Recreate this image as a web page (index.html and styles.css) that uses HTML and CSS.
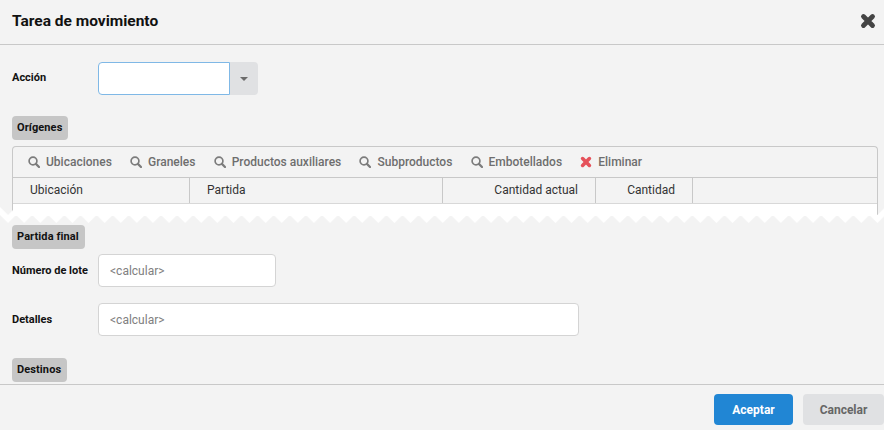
FILE: index.html
```html
<!DOCTYPE html>
<html lang="es">
<head>
    <meta charset="UTF-8">
    <title>Tarea de movimiento</title>
    <link rel="stylesheet" href="styles.css">
</head>
<body>

<svg class="icon-defs" width="0" height="0">
    <symbol id="i-search" viewBox="0 0 12 12">
        <circle cx="5" cy="5" r="3.9" fill="none" stroke="currentColor" stroke-width="1.7"/>
        <path d="M7.9 7.9L11 11" fill="none" stroke="currentColor" stroke-width="2.2" stroke-linecap="round"/>
    </symbol>
    <symbol id="i-times" viewBox="0 0 12 12">
        <path d="M2.6 2.6L9.4 9.4M9.4 2.6L2.6 9.4" fill="none" stroke="currentColor" stroke-width="3.6" stroke-linecap="round"/>
    </symbol>
</svg>

<div class="dialog">
    <div class="dialog-header">
        <h1>Tarea de movimiento</h1>
        <svg class="close"><use href="#i-times"/></svg>
    </div>

    <div class="dialog-body">
        <div class="field field-action">
            <label>Acción</label>
            <input type="text" class="combo-input">
            <span class="combo-button"><i class="caret"></i></span>
        </div>

        <div class="section-label section-origenes">Orígenes</div>

        <div class="panel">
            <div class="toolbar">
                <span class="tool"><svg><use href="#i-search"/></svg>Ubicaciones</span>
                <span class="tool"><svg><use href="#i-search"/></svg>Graneles</span>
                <span class="tool"><svg><use href="#i-search"/></svg>Productos auxiliares</span>
                <span class="tool"><svg><use href="#i-search"/></svg>Subproductos</span>
                <span class="tool"><svg><use href="#i-search"/></svg>Embotellados</span>
                <span class="tool tool-delete"><svg><use href="#i-times"/></svg>Eliminar</span>
            </div>
            <div class="grid-head">
                <span class="col col-ubicacion">Ubicación</span>
                <span class="col col-partida">Partida</span>
                <span class="col col-actual">Cantidad actual</span>
                <span class="col col-cantidad">Cantidad</span>
                <span class="col col-rest"></span>
            </div>
            <div class="grid-body"></div>
        </div>

        <svg class="torn" width="100%" height="16">
            <defs>
                <pattern id="teeth" width="16.1" height="16" patternUnits="userSpaceOnUse">
                    <polygon points="0,0 8.05,8 16.1,0 16.1,8 8.05,16 0,8" fill="#fff"/>
                </pattern>
            </defs>
            <rect width="100%" height="16" fill="url(#teeth)"/>
        </svg>

        <div class="section-label section-final">Partida final</div>

        <div class="field field-lote">
            <label>Número de lote</label>
            <input type="text" class="text-input input-short" placeholder="&lt;calcular&gt;">
        </div>
        <div class="field field-detalles">
            <label>Detalles</label>
            <input type="text" class="text-input input-long" placeholder="&lt;calcular&gt;">
        </div>

        <div class="section-label section-destinos">Destinos</div>
    </div>

    <div class="dialog-footer">
        <button class="btn btn-primary">Aceptar</button>
        <button class="btn btn-default">Cancelar</button>
    </div>
</div>

</body>
</html>
```

FILE: styles.css
```css
body {
    margin: 0;
    height: 430px;
    overflow: hidden;
    background: #f3f3f3;
    font-family: 'Roboto', sans-serif;
    font-size: 12px;
    color: #222;
}
.icon-defs {
    display: block;
    height: 0;
}
.dialog {
    display: flex;
    flex-direction: column;
    height: 430px;
}
.dialog-header {
    display: flex;
    justify-content: space-between;
    align-items: center;
    box-sizing: border-box;
    height: 45px;
    padding: 0 8px 2px 12px;
    border-bottom: 1px solid #c8c8c8;
    flex: none;
}
.dialog-header h1 {
    margin: 0;
    font-size: 15.5px;
    font-weight: 700;
    color: #111;
}
.close {
    width: 16px;
    height: 16px;
    color: #444;
}
.dialog-body {
    position: relative;
    flex: 1;
    overflow: hidden;
    padding: 0 6px 0 12px;
}
.field {
    display: flex;
    align-items: center;
}
.field label {
    width: 86px;
    flex: none;
    font-size: 11px;
    font-weight: 700;
    color: #111;
    white-space: nowrap;
}
.field-action {
    margin-top: 17px;
}
.field-action label {
    margin-bottom: 2px;
}
.field-lote {
    margin-top: 5px;
}
.field-detalles {
    margin-top: 16px;
}
.combo-input {
    box-sizing: border-box;
    width: 132px;
    height: 33px;
    border: 1px solid #7fb8e6;
    border-radius: 4px 0 0 4px;
    background: #fff;
    outline: none;
}
.combo-button {
    display: flex;
    align-items: center;
    justify-content: center;
    width: 28px;
    height: 33px;
    background: #e0e1e3;
    border-radius: 0 4px 4px 0;
}
.caret {
    border-left: 4px solid transparent;
    border-right: 4px solid transparent;
    border-top: 4px solid #6b6b6b;
    margin-top: 1px;
}
.section-label {
    display: table;
    height: 24px;
    line-height: 24px;
    padding: 0 6px 0 5px;
    background: #c6c6c6;
    border-radius: 4px;
    font-size: 11px;
    font-weight: 700;
    letter-spacing: 0.1px;
    color: #111;
}
.section-origenes {
    margin-top: 21px;
}
.section-final {
    margin-top: 9px;
}
.section-destinos {
    margin-top: 22px;
}
.panel {
    margin-top: 6px;
    height: 69px;
    overflow: hidden;
    border: 1px solid #c8c8c8;
    border-bottom: none;
    border-radius: 4px 4px 0 0;
}
.toolbar {
    display: flex;
    align-items: center;
    gap: 18.2px;
    box-sizing: border-box;
    height: 31px;
    padding-left: 15px;
    border-bottom: 1px solid #c8c8c8;
}
.tool {
    display: flex;
    align-items: center;
    font-weight: 500;
    color: #6e6e6e;
    white-space: nowrap;
}
.tool svg {
    width: 12px;
    height: 12px;
    margin-right: 6px;
    color: #7c7c7c;
}
.tool-delete svg {
    color: #e5525b;
}
.grid-head {
    display: flex;
    box-sizing: border-box;
    height: 26px;
    border-bottom: 1px solid #d8d8d8;
}
.col {
    box-sizing: border-box;
    height: 25px;
    line-height: 25px;
    padding: 0 17px;
    border-right: 1px solid #c8c8c8;
    color: #333;
}
.col-ubicacion {
    width: 177px;
}
.col-partida {
    width: 253px;
}
.col-actual {
    width: 153px;
    text-align: right;
}
.col-cantidad {
    width: 97px;
    text-align: right;
}
.col-rest {
    flex: 1;
    border-right: none;
}
.grid-body {
    height: 12px;
    background: #fff;
}
/* torn edge over the bottom of the panel */
.torn {
    position: absolute;
    left: 0;
    top: 162px;
}
.text-input {
    box-sizing: border-box;
    height: 33px;
    padding: 0 11px;
    border: 1px solid #d4d4d4;
    border-radius: 4px;
    background: #fff;
    font-family: 'Roboto', sans-serif;
    font-size: 12px;
    outline: none;
}
.text-input::placeholder {
    color: #808080;
    opacity: 1;
}
.input-short {
    width: 178px;
}
.input-long {
    width: 481px;
}
.dialog-footer {
    display: flex;
    justify-content: flex-end;
    gap: 10px;
    flex: none;
    box-sizing: border-box;
    height: 46px;
    padding-top: 9px;
    border-top: 1px solid #c8c8c8;
}
.btn {
    height: 31px;
    border: none;
    border-radius: 4px;
    font-family: 'Roboto', sans-serif;
    font-size: 12px;
    font-weight: 700;
}
.btn-primary {
    width: 79px;
    background: #2186d4;
    color: #fff;
}
.btn-default {
    width: 81px;
    background: #e0e1e3;
    color: #666;
}
```
